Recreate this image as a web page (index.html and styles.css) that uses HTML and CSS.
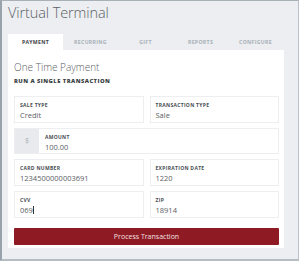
FILE: index.html
```html
<!DOCTYPE html>
<html>
<head>
<meta charset="utf-8">
<link rel="stylesheet" href="styles.css">
</head>
<body>
<div class="frame">
  <h1 class="title">Virtual Terminal</h1>
  <div class="tabs">
    <div class="tab active">PAYMENT</div>
    <div class="tab">RECURRING</div>
    <div class="tab">GIFT</div>
    <div class="tab">REPORTS</div>
    <div class="tab">CONFIGURE</div>
  </div>
  <div class="card">
    <h2 class="heading">One Time Payment</h2>
    <div class="sub">RUN A SINGLE TRANSACTION</div>
    <div class="grid">
      <div class="field"><div class="label">SALE TYPE</div><div class="value">Credit</div></div>
      <div class="field"><div class="label">TRANSACTION TYPE</div><div class="value">Sale</div></div>
      <div class="field amount">
        <div class="addon">$</div>
        <div class="inner"><div class="label">AMOUNT</div><div class="value">100.00</div></div>
      </div>
      <div class="field"><div class="label">CARD NUMBER</div><div class="value">1234500000003691</div></div>
      <div class="field"><div class="label">EXPIRATION DATE</div><div class="value">1220</div></div>
      <div class="field"><div class="label">CVV</div><div class="value">069<span class="caret"></span></div></div>
      <div class="field"><div class="label">ZIP</div><div class="value">18914</div></div>
    </div>
    <button class="btn">Process Transaction</button>
  </div>
</div>
</body>
</html>
```
FILE: styles.css
```css
html, body {
  margin: 0;
  padding: 0;
  background: #ffffff;
}
body {
  width: 300px;
  height: 261px;
  overflow: hidden;
  font-family: "Open Sans", "Liberation Sans", sans-serif;
}
.frame {
  box-sizing: border-box;
  width: 299px;
  height: 261px;
  background: #eceef1;
  border-left: 2px solid #98a2ac;
  border-top: 1px solid #a8b0b8;
  border-right: 1px solid #b8c0c8;
  border-bottom: 2px solid #b4bcc4;
  padding: 0 14px 0 6px;
}
.title {
  margin: 0;
  padding-top: 3px;
  height: 30px;
  font-family: "Open Sans", sans-serif;
  font-weight: 300;
  font-size: 14.5px;
  line-height: 18px;
  color: #5a5f66;
  letter-spacing: -0.1px;
}
.tabs {
  display: flex;
  height: 16px;
}
.tab {
  width: 55px;
  font-size: 5.2px;
  font-weight: 700;
  letter-spacing: 0.3px;
  color: #a8b0b8;
  text-align: center;
  line-height: 16px;
}
.tab.active {
  background: #ffffff;
  color: #3d4248;
}
.card {
  background: #ffffff;
  padding: 10px 5px 4px 6px;
  height: 198px;
  box-sizing: border-box;
}
.heading {
  margin: 0;
  font-weight: 300;
  font-size: 10px;
  line-height: 14px;
  color: #5d6268;
}
.sub {
  margin-top: 3px;
  font-size: 5.8px;
  font-weight: 800;
  letter-spacing: 0.45px;
  color: #3a3f45;
  line-height: 8px;
}
.grid {
  margin-top: 11px;
  display: grid;
  grid-template-columns: 1fr 1fr;
  column-gap: 6px;
  row-gap: 5px;
}
.field {
  box-sizing: border-box;
  height: 27px;
  border: 1px solid #eceef0;
  padding: 5px 0 0 5px;
}
.field.amount {
  grid-column: 1 / 3;
  display: flex;
  padding: 0;
  height: 26px;
}
.addon {
  width: 24px;
  background: #e8eaed;
  color: #a9b0b7;
  font-size: 7px;
  text-align: center;
  line-height: 24px;
}
.inner {
  padding: 5px 0 0 6px;
}
.label {
  font-size: 5px;
  font-weight: 700;
  letter-spacing: 0.3px;
  color: #484d53;
  line-height: 7px;
}
.value {
  font-size: 7.5px;
  color: #5a5e64;
  line-height: 10px;
  margin-top: 1px;
}
.caret {
  display: inline-block;
  width: 0.7px;
  height: 8px;
  background: #333;
  vertical-align: -1px;
}
.btn {
  display: block;
  width: 100%;
  margin-top: 10px;
  height: 17px;
  border: none;
  border-radius: 1px;
  background: #8e1a24;
  color: #f3e0e2;
  font-family: "Open Sans", "Liberation Sans", sans-serif;
  font-size: 7px;
  padding: 0;
}
```
